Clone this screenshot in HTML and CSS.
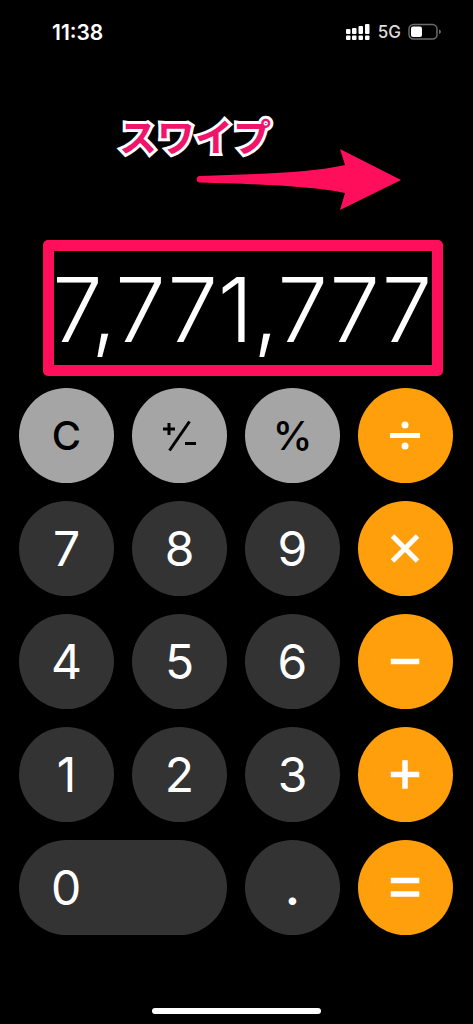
FILE: index.html
```html
<!DOCTYPE html>
<html lang="ja">
<head>
<meta charset="utf-8">
<meta name="viewport" content="width=device-width, initial-scale=1">
<title>電卓</title>
<link rel="stylesheet" href="styles.css">
</head>
<body>
<header class="status">
  <time class="clock">11:38</time>
  <div class="indicators">
    <svg class="signal" width="26" height="18" viewBox="0 0 26 18" fill="#fff" aria-hidden="true">
      <rect x="1" y="6" width="4.500" height="5" rx="1"/><rect x="7" y="5" width="4.500" height="6" rx="1"/><rect x="13.500" y="3" width="4.500" height="8" rx="1"/><rect x="20" y="1" width="4.500" height="10" rx="1"/>
      <rect x="1" y="12.500" width="4.500" height="4.500" rx="1"/><rect x="7" y="12.500" width="4.500" height="4.500" rx="1"/><rect x="13.500" y="12.500" width="4.500" height="4.500" rx="1"/><rect x="20" y="12.500" width="4.500" height="4.500" rx="1"/>
    </svg>
    <span class="network">5G</span>
    <svg class="battery" width="34" height="18" viewBox="0 0 34 18" aria-hidden="true">
      <rect x="1" y="1.500" width="28" height="14.500" rx="4.500" fill="none" stroke="#6c6c6c" stroke-width="1.500"/>
      <rect x="3" y="3.500" width="11" height="10.500" rx="2" fill="#fff"/>
      <path d="M31 6.500q2 .8 2 2.300t-2 2.300z" fill="#6c6c6c"/>
    </svg>
  </div>
</header>
<main class="calculator">
  <div class="hint">
    <span class="hint-label">スワイプ</span>
    <svg class="hint-arrow" width="206" height="64" viewBox="0 0 206 64" aria-hidden="true">
      <path d="M4 28C60 26 115 25 149 17L144 1 205 32 144 62 149 45C115 38 60 36 4 34.500A3.200 3.200 0 0 1 4 28Z" fill="#ff0f5b"/>
    </svg>
  </div>
  <output class="display"><span class="digits">7,771,777</span></output>
  <div class="keypad">
    <button class="key function">C</button>
    <button class="key function" aria-label="符号切替"><svg width="36" height="32" viewBox="0 0 36 32" fill="none" stroke="#000" stroke-width="3"><path d="M1 9h12M7 3v12M7.500 30.500L27.500 1.500" /><path d="M23 23.500h11"/></svg></button>
    <button class="key function">%</button>
    <button class="key operator" aria-label="割る"><svg width="32" height="32" viewBox="0 0 32 32"><path d="M0 15.500h30" stroke="#fff" stroke-width="5"/><circle cx="15" cy="5" r="3.500" fill="#fff"/><circle cx="15" cy="26" r="3.500" fill="#fff"/></svg></button>
    <button class="key">7</button>
    <button class="key">8</button>
    <button class="key">9</button>
    <button class="key operator" aria-label="掛ける"><svg width="32" height="32" viewBox="0 0 32 32"><path d="M2.500 3l25 25M27.500 3l-25 25" stroke="#fff" stroke-width="5"/></svg></button>
    <button class="key">4</button>
    <button class="key">5</button>
    <button class="key">6</button>
    <button class="key operator" aria-label="引く"><svg width="32" height="32" viewBox="0 0 32 32"><path d="M.8 15.500h28.500" stroke="#fff" stroke-width="5.500"/></svg></button>
    <button class="key">1</button>
    <button class="key">2</button>
    <button class="key">3</button>
    <button class="key operator" aria-label="足す"><svg width="32" height="32" viewBox="0 0 32 32"><path d="M.8 15.500h28.500M15 1.300v28.500" stroke="#fff" stroke-width="5.500"/></svg></button>
    <button class="key zero">0</button>
    <button class="key" aria-label="小数点"><span class="point">.</span></button>
    <button class="key operator" aria-label="等しい"><svg width="32" height="32" viewBox="0 0 32 32"><path d="M.8 8.500h28.500M.8 22h28.500" stroke="#fff" stroke-width="5.500"/></svg></button>
  </div>
</main>
<footer class="home"><div class="home-bar"></div></footer>
</body>
</html>
```
FILE: styles.css
```css
* {
  box-sizing: border-box;
}

body {
  margin: 0;
  min-height: 100vh;
  display: flex;
  flex-direction: column;
  background: #000;
  color: #fff;
  font-family: Inter, "Liberation Sans", "Noto Sans CJK JP", sans-serif;
}

.status {
  display: flex;
  justify-content: space-between;
  align-items: center;
  height: 64px;
  padding: 0 31px 0 52px;
}

.clock {
  font-size: 21px;
  font-weight: 600;
}

.indicators {
  display: flex;
  align-items: center;
  gap: 7px;
}

.network {
  font-size: 17px;
  font-weight: 500;
  color: #ddd;
}

.calculator {
  display: flex;
  flex-direction: column;
}

.hint {
  display: flex;
  flex-direction: column;
  padding: 49px 71px 0 119px;
}

.hint-label {
  font-family: "Noto Sans CJK JP", sans-serif;
  font-size: 38px;
  font-weight: 700;
  line-height: 44px;
  color: #f0146a;
  -webkit-text-stroke: 6px #fff;
  paint-order: stroke fill;
}

.hint-arrow {
  align-self: flex-end;
  margin-top: -9px;
}

.display {
  display: flex;
  justify-content: flex-end;
  align-items: center;
  height: 136px;
  margin: 28px 30px 0 43px;
  border: 11px solid #ff0f5b;
  border-radius: 5px;
}

.digits {
  padding-top: 4px;
  font-size: 90px;
  font-weight: 300;
  line-height: 110px;
}

.keypad {
  display: grid;
  grid-template-columns: repeat(4, 1fr);
  gap: 18px;
  padding: 12px 20px 0 19px;
}

.key {
  display: flex;
  align-items: center;
  justify-content: center;
  aspect-ratio: 1;
  padding: 0;
  border: 0;
  border-radius: 100px;
  background: #333;
  color: #fff;
  font-family: inherit;
  font-size: 48px;
  font-weight: 400;
  line-height: 1;
}

.function {
  background: #a5a5a5;
  color: #000;
  font-size: 40px;
  font-weight: 500;
}

.operator {
  background: #ff9f0c;
}

.zero {
  grid-column: span 2;
  aspect-ratio: auto;
  justify-content: flex-start;
  padding-left: 32px;
}

.point {
  font-weight: 600;
}

.home {
  display: flex;
  justify-content: center;
  margin-top: auto;
  padding-bottom: 10px;
}

.home-bar {
  width: 169px;
  height: 6px;
  border-radius: 3px;
  background: #fff;
}
```
